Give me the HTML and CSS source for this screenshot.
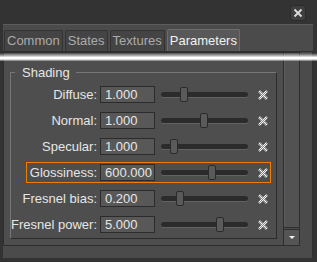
FILE: index.html
```html
<!DOCTYPE html>
<html lang="en">
<head>
    <meta charset="UTF-8">
    <meta name="viewport" content="width=device-width, initial-scale=1.0">
    <title>Material parameters</title>
    <link rel="stylesheet" href="styles.css">
</head>
<body>
    <svg class="defs" width="0" height="0">
        <defs>
            <pattern id="chk" width="2" height="2" patternUnits="userSpaceOnUse">
                <rect width="2" height="2" fill="#8a8a8a"/>
                <rect width="1" height="1" fill="#f4f4f4"/>
                <rect x="1" y="1" width="1" height="1" fill="#f4f4f4"/>
            </pattern>
        </defs>
    </svg>

    <div class="titlebar">
        <button class="close-btn">
            <svg width="10" height="10" viewBox="0 0 10 10"><path d="M1.5 1.5L8.5 8.5M8.5 1.5L1.5 8.5" stroke="#dcdcdc" stroke-width="1.8"/></svg>
        </button>
    </div>

    <div class="window">
        <div class="tabs">
            <div class="tab">Common</div>
            <div class="tab">States</div>
            <div class="tab">Textures</div>
            <div class="tab active">Parameters</div>
        </div>
        <div class="glare"></div>

        <div class="pane">
            <div class="scroll-area">
                <div class="scroll-content">
                    <fieldset class="group">
                        <legend>Shading</legend>
                        <div class="rows">
                            <div class="row">
                                <div class="label">Diffuse:</div>
                                <div class="field">1.000</div>
                                <div class="slider"><div class="handle" style="left:19px"></div></div>
                                <svg class="reset" viewBox="0 0 10 10"><path d="M1 1L9 9M9 1L1 9" stroke="url(#chk)" stroke-width="2.6"/></svg>
                            </div>
                            <div class="row">
                                <div class="label">Normal:</div>
                                <div class="field">1.000</div>
                                <div class="slider"><div class="handle" style="left:39px"></div></div>
                                <svg class="reset" viewBox="0 0 10 10"><path d="M1 1L9 9M9 1L1 9" stroke="url(#chk)" stroke-width="2.6"/></svg>
                            </div>
                            <div class="row">
                                <div class="label">Specular:</div>
                                <div class="field">1.000</div>
                                <div class="slider"><div class="handle" style="left:9px"></div></div>
                                <svg class="reset" viewBox="0 0 10 10"><path d="M1 1L9 9M9 1L1 9" stroke="url(#chk)" stroke-width="2.6"/></svg>
                            </div>
                            <div class="row selected">
                                <div class="label">Glossiness:</div>
                                <div class="field">600.000</div>
                                <div class="slider"><div class="handle" style="left:47px"></div></div>
                                <svg class="reset" viewBox="0 0 10 10"><path d="M1 1L9 9M9 1L1 9" stroke="url(#chk)" stroke-width="2.6"/></svg>
                            </div>
                            <div class="row">
                                <div class="label">Fresnel bias:</div>
                                <div class="field">0.200</div>
                                <div class="slider"><div class="handle" style="left:15px"></div></div>
                                <svg class="reset" viewBox="0 0 10 10"><path d="M1 1L9 9M9 1L1 9" stroke="url(#chk)" stroke-width="2.6"/></svg>
                            </div>
                            <div class="row">
                                <div class="label">Fresnel power:</div>
                                <div class="field">5.000</div>
                                <div class="slider"><div class="handle" style="left:55px"></div></div>
                                <svg class="reset" viewBox="0 0 10 10"><path d="M1 1L9 9M9 1L1 9" stroke="url(#chk)" stroke-width="2.6"/></svg>
                            </div>
                        </div>
                    </fieldset>
                </div>
                <div class="scrollbar">
                    <div class="sb-track"></div>
                    <div class="sb-down"><span class="arrow"></span></div>
                </div>
            </div>
        </div>
    </div>
</body>
</html>
```

FILE: styles.css
```css
body {
    margin: 0;
    width: 317px;
    height: 262px;
    overflow: hidden;
    background: #333;
    font-family: 'Liberation Sans', Arial, sans-serif;
    font-size: 13px;
    color: #e6e6e6;
}

.defs {
    position: absolute;
}

.titlebar {
    height: 24px;
    display: flex;
    justify-content: flex-end;
    padding-right: 11px;
}

.close-btn {
    margin-top: 5px;
    width: 16px;
    height: 16px;
    padding: 0;
    border: 1px solid #2b2b2b;
    border-radius: 3px;
    background: #3f3f3f;
    display: flex;
    align-items: center;
    justify-content: center;
}

.window {
    position: relative;
    margin-left: 3px;
    width: 310px;
    height: 234px;
    box-sizing: border-box;
    background: #4b4b4b;
    border-top: 1px solid #5c5c5c;
    padding-top: 4px;
    display: flex;
    flex-direction: column;
}

.tabs {
    display: flex;
    align-items: flex-end;
    gap: 2px;
    height: 22px;
    padding-left: 1px;
}

.tab {
    height: 21px;
    line-height: 20px;
    padding: 0 2px;
    box-sizing: border-box;
    background: #444;
    color: #ababab;
    border: 1px solid #333;
    border-bottom: none;
    border-radius: 2px 2px 0 0;
}

.tab.active {
    height: 22px;
    line-height: 21px;
    background: #585858;
    color: #f2f2f2;
    border-color: #6c6c6c;
}

.glare {
    position: absolute;
    left: -3px;
    top: 28px;
    width: 317px;
    height: 8px;
    background: linear-gradient(to bottom,
        rgba(255, 255, 255, 0) 0,
        rgba(255, 255, 255, 0.5) 30%,
        #fff 55%,
        #fff 75%,
        rgba(255, 255, 255, 0.2) 100%);
}

.pane {
    flex: 1;
    display: flex;
    align-items: flex-start;
    border-top: 1px solid #2f2f2f;
    border-right: 1px solid #2f2f2f;
}

.scroll-area {
    width: 297px;
    height: 194px;
    box-sizing: border-box;
    display: flex;
    border: 1px solid #2e2e2e;
    background: #4e4e4e;
}

.scroll-content {
    flex: 1;
    padding: 12px 6px 0 6px;
}

.group {
    margin: 0;
    padding: 4px 0 3px 4px;
    min-width: 0;
    border: 1px solid;
    border-color: #767676 #2b2b2b #2b2b2b #767676;
}

.group legend {
    padding: 0 6px 0 7px;
    line-height: 15px;
}

.rows {
    display: flex;
    flex-direction: column;
    gap: 5px;
}

.row {
    display: flex;
    align-items: center;
    width: 245px;
    height: 21px;
    margin-left: 11px;
    box-sizing: border-box;
    border: 1px solid transparent;
}

.row.selected {
    border-color: #f07d00;
}

.label {
    width: 70px;
    margin-right: 3px;
    display: flex;
    justify-content: flex-end;
    white-space: nowrap;
}

.field {
    width: 55px;
    height: 17px;
    box-sizing: border-box;
    margin-right: 6px;
    padding-left: 4px;
    line-height: 15px;
    background: #585858;
    border: 1px solid #2b2b2b;
}

.slider {
    position: relative;
    width: 87px;
    height: 5px;
    margin-right: 10px;
    border-radius: 3px;
    background: #2b2b2b;
    box-shadow: 0 1px 0 #626262;
}

.handle {
    position: absolute;
    top: -5px;
    width: 8px;
    height: 15px;
    box-sizing: border-box;
    background: #5a5a5a;
    border: 1px solid #2a2a2a;
    border-radius: 2px;
}

.reset {
    width: 10px;
    height: 10px;
}

.scrollbar {
    width: 15px;
    display: flex;
    flex-direction: column;
    border-left: 1px solid #2e2e2e;
}

.sb-track {
    flex: 1;
    background: #525252;
    border-bottom: 1px solid #2e2e2e;
    box-shadow: inset 1px 0 0 #5e5e5e;
}

.sb-down {
    height: 16px;
    margin-top: 1px;
    box-sizing: border-box;
    border-top: 1px solid #2e2e2e;
    background: #555;
    display: flex;
    align-items: center;
    justify-content: center;
}

.arrow {
    width: 0;
    height: 0;
    border-left: 3px solid transparent;
    border-right: 3px solid transparent;
    border-top: 3px solid #f0f0f0;
}
```
